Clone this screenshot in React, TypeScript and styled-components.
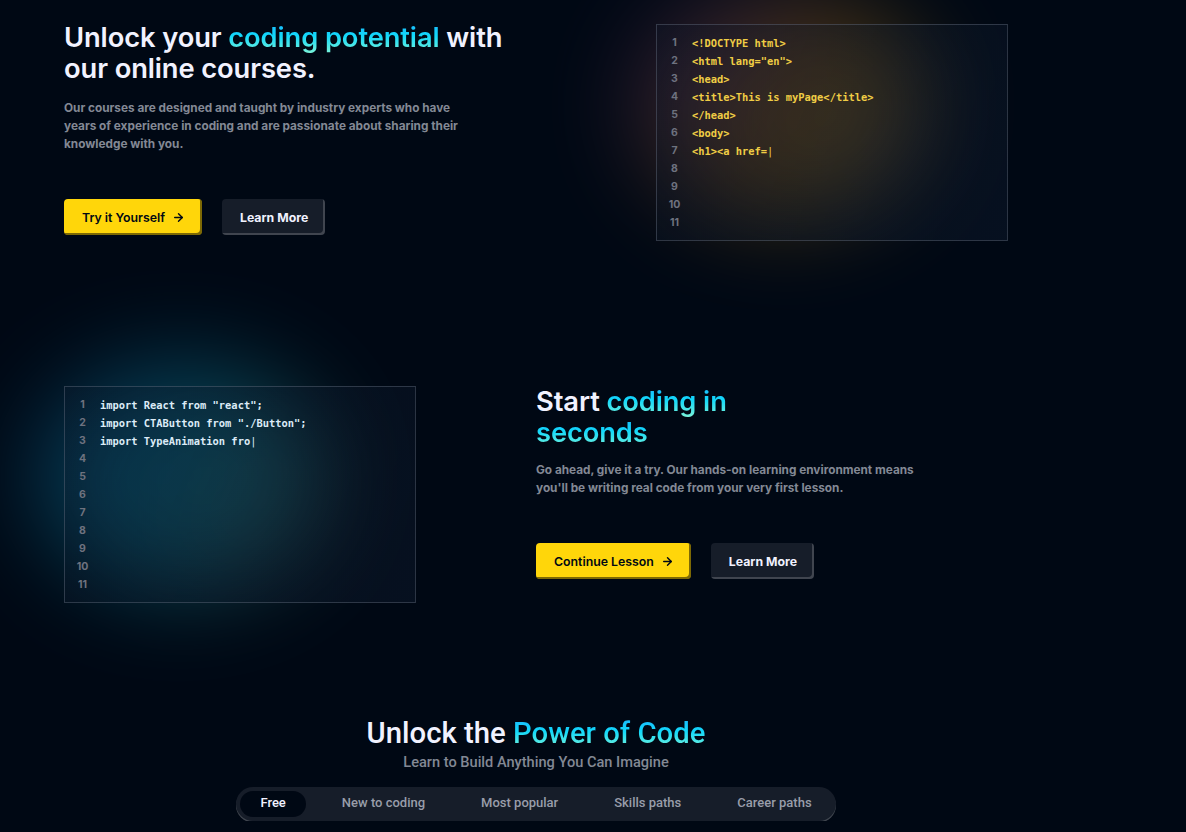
import React from 'react';
import styled, { createGlobalStyle } from 'styled-components';
import { ArrowRight } from 'lucide-react';

const GlobalStyle = createGlobalStyle`
  html, body {
    margin: 0;
    padding: 0;
    background: #000814;
  }
  body {
    font-family: Inter, "Noto Sans", sans-serif;
    color: #F1F2FF;
    overflow: hidden;
  }
  * { box-sizing: border-box; }
`;

const Page = styled.div`
  width: 944px;
  margin-left: 64px;
  padding-top: 22px;
  display: flex;
  flex-direction: column;
`;

const Row = styled.section<{ $reverse?: boolean; $gapTop?: number }>`
  display: flex;
  flex-direction: ${({ $reverse }) => ($reverse ? 'row-reverse' : 'row')};
  justify-content: space-between;
  align-items: flex-start;
  margin-top: ${({ $gapTop }) => $gapTop ?? 0}px;
`;

const TextCol = styled.div`
  width: 472px;
  display: flex;
  flex-direction: column;
`;

const Heading = styled.h1<{ $narrow?: boolean }>`
  margin: 0;
  font-size: 27.3px;
  line-height: 31px;
  font-weight: 600;
  color: #F1F2FF;
  letter-spacing: -0.1px;
  width: ${({ $narrow }) => ($narrow ? '236px' : 'auto')};
`;

const Gradient = styled.span`
  background: linear-gradient(180deg, #1FA2FF -20%, #12D8FA 45%, #A6FFCB 120%);
  -webkit-background-clip: text;
  background-clip: text;
  color: transparent;
`;

const Lead = styled.p<{ $top: number; $width: number }>`
  margin: ${({ $top }) => $top}px 0 0;
  font-size: 11.8px;
  line-height: 18px;
  font-weight: 700;
  color: #838894;
  width: ${({ $width }) => $width}px;
`;

const Actions = styled.div`
  display: flex;
  gap: 20px;
  margin-top: 46px;
`;

const Button = styled.button<{ $active?: boolean }>`
  display: inline-flex;
  align-items: center;
  gap: 7px;
  height: 36px;
  padding: 0 17px 0 18px;
  border: none;
  border-radius: 4px;
  font-family: Inter, sans-serif;
  font-size: 12.3px;
  font-weight: ${({ $active }) => ($active ? 600 : 700)};
  background: ${({ $active }) => ($active ? '#FFD60A' : '#161D29')};
  color: ${({ $active }) => ($active ? '#000814' : '#F1F2FF')};
  box-shadow: ${({ $active }) =>
    $active ? '-2px -2px 0 0 rgba(0,0,0,0.51) inset' : '-2px -2px 0 0 rgba(255,255,255,0.18) inset'};
  cursor: pointer;
`;

const CodeWrap = styled.div<{ $top?: number }>`
  position: relative;
  width: 352px;
  margin-top: ${({ $top }) => $top ?? 0}px;
`;

const Glow = styled.div<{ $tone: 'warm' | 'cool' }>`
  position: absolute;
  left: ${({ $tone }) => ($tone === 'warm' ? '-20px' : '-30px')};
  top: ${({ $tone }) => ($tone === 'warm' ? '-35px' : '-25px')};
  width: 290px;
  height: 230px;
  border-radius: 50%;
  background: ${({ $tone }) =>
    $tone === 'warm'
      ? 'linear-gradient(123.77deg, #8A2BE2 -6.46%, #FFA500 59.04%, #F8F8FF 124.53%)'
      : 'linear-gradient(118.19deg, #1FA2FF -3.62%, #12D8FA 50.44%, #A6FFCB 104.51%)'};
  opacity: 0.28;
  filter: blur(48px);
  pointer-events: none;
`;

const CodeBox = styled.div`
  position: relative;
  display: flex;
  height: 217px;
  padding: 9px 0;
  border: 1px solid rgba(120, 130, 145, 0.35);
  background: linear-gradient(111.93deg, rgba(14, 26, 45, 0.24) -1.4%, rgba(17, 30, 50, 0.38) 104.96%);
`;

const Numbers = styled.div`
  width: 35px;
  display: flex;
  flex-direction: column;
  text-align: center;
  font-family: Inter, sans-serif;
  font-size: 10.5px;
  font-weight: 700;
  line-height: 18px;
  color: #6E727F;
`;

const Code = styled.pre<{ $color: string }>`
  margin: 0;
  flex: 1;
  font-family: "DejaVu Sans Mono", "Liberation Mono", monospace;
  font-size: 10.4px;
  font-weight: 700;
  line-height: 18px;
  color: ${({ $color }) => $color};
  white-space: pre;
`;

const Caret = styled.span`
  font-weight: 400;
`;

const Explore = styled.section`
  margin-top: 113px;
  display: flex;
  flex-direction: column;
  align-items: center;
`;

const ExploreTitle = styled.h2`
  margin: 0;
  font-family: Roboto, Inter, sans-serif;
  font-size: 29.3px;
  line-height: 34px;
  font-weight: 500;
  color: #F1F2FF;
`;

const ExploreSub = styled.p`
  margin: 3px 0 0;
  font-family: Roboto, Inter, sans-serif;
  font-size: 14.6px;
  line-height: 18px;
  font-weight: 500;
  color: #838894;
`;

const Tabs = styled.div`
  margin-top: 16px;
  display: flex;
  gap: 16px;
  padding: 4px;
  border-radius: 999px;
  background: #161D29;
  box-shadow: 0 1.5px 0 rgba(255, 255, 255, 0.25);
`;

const Tab = styled.div<{ $active?: boolean }>`
  padding: 4px 20px 6px;
  border-radius: 999px;
  font-family: Roboto, Inter, sans-serif;
  font-size: 13px;
  line-height: 16px;
  font-weight: 500;
  background: ${({ $active }) => ($active ? '#000814' : 'transparent')};
  color: ${({ $active }) => ($active ? '#F1F2FF' : '#999DAA')};
`;

const lines = Array.from({ length: 11 }, (_, i) => i + 1);

const CodeBlock = ({ code, color, tone, top }: { code: string; color: string; tone: 'warm' | 'cool'; top?: number }) => (
  <CodeWrap $top={top}>
    <Glow $tone={tone} />
    <CodeBox>
      <Numbers>
        {lines.map((n) => (
          <span key={n}>{n}</span>
        ))}
      </Numbers>
      <Code $color={color}>
        {code}
        <Caret>|</Caret>
      </Code>
    </CodeBox>
  </CodeWrap>
);

const tabs = ['Free', 'New to coding', 'Most popular', 'Skills paths', 'Career paths'];

export default function App() {
  return (
    <>
      <GlobalStyle />
      <Page>
        <Row>
          <TextCol>
            <Heading>
              Unlock your <Gradient>coding potential</Gradient> with our online courses.
            </Heading>
            <Lead $top={15} $width={410}>
              Our courses are designed and taught by industry experts who have years of experience in coding and are
              passionate about sharing their knowledge with you.
            </Lead>
            <Actions>
              <Button $active>
                Try it Yourself <ArrowRight size={13} strokeWidth={2.6} />
              </Button>
              <Button>Learn More</Button>
            </Actions>
          </TextCol>
          <CodeBlock
            tone="warm"
            top={2}
            color="#F0CD45"
            code={'<!DOCTYPE html>\n<html lang="en">\n<head>\n<title>This is myPage</title>\n</head>\n<body>\n<h1><a href='}
          />
        </Row>

        <Row $reverse $gapTop={145}>
          <TextCol>
            <Heading $narrow>
              Start <Gradient>coding in seconds</Gradient>
            </Heading>
            <Lead $top={13} $width={400}>
              Go ahead, give it a try. Our hands-on learning environment means you'll be writing real code from your
              very first lesson.
            </Lead>
            <Actions>
              <Button $active>
                Continue Lesson <ArrowRight size={13} strokeWidth={2.6} />
              </Button>
              <Button>Learn More</Button>
            </Actions>
          </TextCol>
          <CodeBlock
            tone="cool"
            color="#DCEBF7"
            code={'import React from "react";\nimport CTAButton from "./Button";\nimport TypeAnimation fro'}
          />
        </Row>

        <Explore>
          <ExploreTitle>
            Unlock the <Gradient>Power of Code</Gradient>
          </ExploreTitle>
          <ExploreSub>Learn to Build Anything You Can Imagine</ExploreSub>
          <Tabs>
            {tabs.map((t, i) => (
              <Tab key={t} $active={i === 0}>
                {t}
              </Tab>
            ))}
          </Tabs>
        </Explore>
      </Page>
    </>
  );
}
